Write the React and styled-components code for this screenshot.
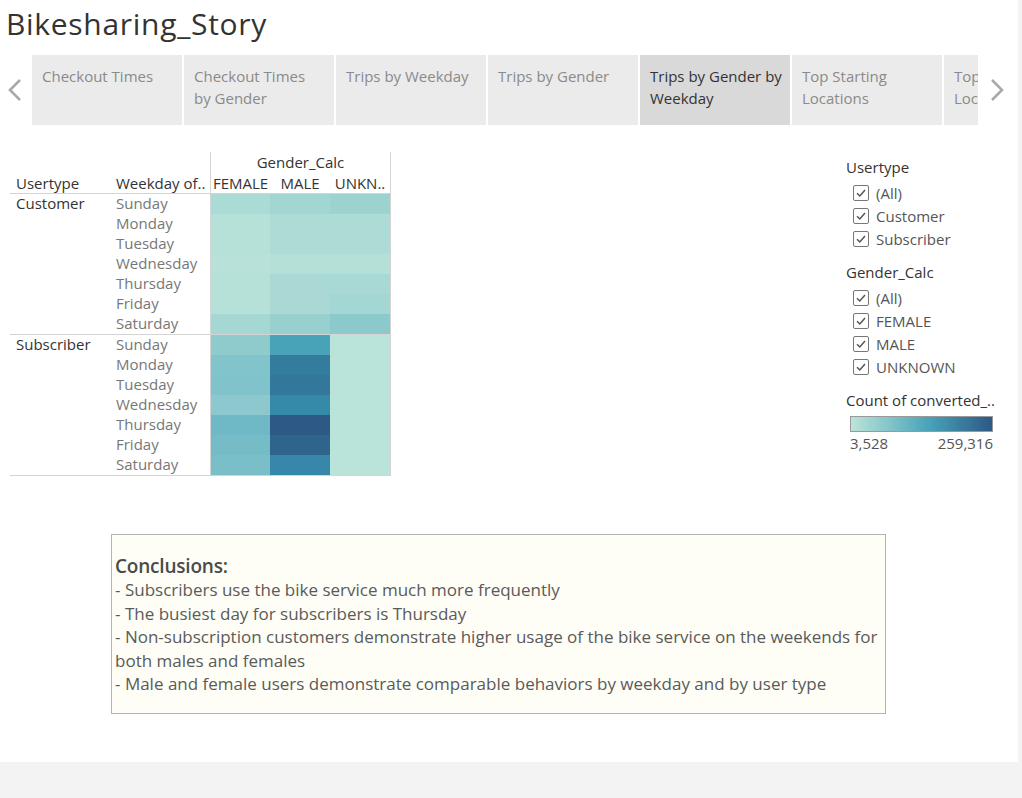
import React from 'react';
import styled, { createGlobalStyle } from 'styled-components';

const GlobalStyle = createGlobalStyle`
  html, body {
    margin: 0;
    padding: 0;
    background: #f3f3f3;
  }
  body {
    font-family: "Open Sans", "Noto Sans", sans-serif;
    color: #333;
  }
`;

const Page = styled.div`
  width: 1018px;
  height: 762px;
  background: #fff;
  overflow: hidden;
`;

const Title = styled.h1`
  margin: 0;
  padding: 6px 0 0 6px;
  height: 36px;
  font-size: 30px;
  line-height: 36px;
  font-weight: 400;
  letter-spacing: 0.7px;
  color: #333;
`;

const Nav = styled.div`
  display: flex;
  height: 70px;
  margin-top: 13px;
`;

const ArrowBox = styled.div`
  width: ${(p) => p.$w}px;
  display: flex;
  align-items: center;
  padding-left: ${(p) => p.$pad}px;
  box-sizing: border-box;
`;

const TabStrip = styled.div`
  width: 946px;
  display: flex;
  gap: 2px;
  overflow: hidden;
`;

const Tab = styled.div`
  flex: 0 0 150px;
  box-sizing: border-box;
  padding: 10px 0 0 10px;
  overflow: hidden;
  background: ${(p) => (p.$active ? '#d9d9d9' : '#ebebeb')};
  color: ${(p) => (p.$active ? '#333' : '#8a8a8a')};
  font-size: 15px;
  line-height: 22px;
`;

const TabLine = styled.div`
  white-space: nowrap;
`;

const Content = styled.div`
  display: flex;
  margin-top: 27px;
`;

const Table = styled.div`
  margin-left: 10px;
  width: 381px;
`;

const HeadRow = styled.div`
  display: flex;
`;

const LabelHead = styled.div`
  width: 200px;
  display: flex;
  align-items: flex-end;
`;

const HeadCell = styled.div`
  width: 100px;
  box-sizing: border-box;
  padding-left: 6px;
  height: 20px;
  line-height: 20px;
  font-size: 15px;
  color: #333;
  white-space: nowrap;
`;

const GenderHead = styled.div`
  width: 181px;
  box-sizing: border-box;
  border-left: 1px solid #d4d4d4;
  border-right: 1px solid #d4d4d4;
`;

const GenderTitle = styled.div`
  text-align: center;
  font-size: 15px;
  line-height: 21px;
  color: #333;
`;

const ColNames = styled.div`
  display: grid;
  grid-template-columns: 59px 60px 60px;
  height: 20px;
  line-height: 20px;
`;

const ColName = styled.div`
  text-align: center;
  font-size: 15px;
  color: #333;
  white-space: nowrap;
`;

const Group = styled.div`
  display: flex;
  border-top: 1px solid #d4d4d4;
  border-bottom: ${(p) => (p.$last ? '1px solid #d4d4d4' : 'none')};
`;

const UserCell = styled.div`
  width: 100px;
  box-sizing: border-box;
  padding-left: 6px;
  font-size: 15px;
  line-height: 19px;
  color: #333;
`;

const DayList = styled.div`
  width: 100px;
  box-sizing: border-box;
  padding-left: 6px;
`;

const Day = styled.div`
  height: 20px;
  line-height: 19px;
  font-size: 15px;
  color: #777;
`;

const Heat = styled.div`
  width: 181px;
  box-sizing: border-box;
  border-left: 1px solid #d4d4d4;
  border-right: 1px solid #d4d4d4;
  display: grid;
  grid-template-columns: 59px 60px 60px;
  grid-auto-rows: 20px;
`;

const HeatCell = styled.div`
  background: ${(p) => p.$c};
`;

const Legend = styled.div`
  margin-left: auto;
  width: 172px;
  padding-top: 5px;
`;

const LegendTitle = styled.div`
  font-size: 15px;
  line-height: 20px;
  color: #333;
  margin-bottom: ${(p) => p.$mb || 4}px;
  white-space: nowrap;
`;

const CheckList = styled.div`
  padding-left: 7px;
  margin-bottom: 12px;
`;

const CheckRow = styled.div`
  display: flex;
  align-items: center;
  height: 23px;
  gap: 7px;
  font-size: 15px;
  color: #555;
`;

const Box = styled.span`
  width: 16px;
  height: 16px;
  box-sizing: border-box;
  border: 1px solid #777;
  border-radius: 2px;
  display: flex;
  align-items: center;
  justify-content: center;
`;

const Ramp = styled.div`
  margin-left: 4px;
  width: 143px;
  height: 16px;
  box-sizing: border-box;
  border: 1px solid #999;
  background: linear-gradient(to right, #bce4d8, #49a3b9 55%, #2c5985);
`;

const RampLabels = styled.div`
  margin-left: 4px;
  width: 143px;
  display: flex;
  justify-content: space-between;
  font-size: 15px;
  line-height: 22px;
  color: #555;
`;

const NoteBox = styled.div`
  margin: 58px 0 0 111px;
  width: 775px;
  height: 180px;
  box-sizing: border-box;
  border: 1px solid #b4b4b4;
  background: #fefef6;
  padding: 19px 0 0 3px;
`;

const NoteTitle = styled.div`
  font-size: 19px;
  line-height: 24px;
  font-weight: 600;
  color: #4a4a4a;
  letter-spacing: -0.2px;
`;

const NoteLine = styled.div`
  font-size: 17px;
  line-height: 23.5px;
  color: #5a5a5a;
`;

const Chevron = ({ dir }) => (
  <svg width="16" height="24" viewBox="0 0 16 24">
    <path
      d={dir === 'left' ? 'M13 2 L3 12 L13 22' : 'M3 2 L13 12 L3 22'}
      fill="none"
      stroke="#a9a9a9"
      strokeWidth="2.6"
    />
  </svg>
);

const Tick = () => (
  <svg width="12" height="12" viewBox="0 0 12 12">
    <path d="M2 6.2 L4.8 9 L10 3" fill="none" stroke="#555" strokeWidth="1.5" />
  </svg>
);

const tabs = [
  ['Checkout Times'],
  ['Checkout Times', 'by Gender'],
  ['Trips by Weekday'],
  ['Trips by Gender'],
  ['Trips by Gender by', 'Weekday'],
  ['Top Starting', 'Locations'],
  ['Top Ending', 'Locations'],
];

const days = ['Sunday', 'Monday', 'Tuesday', 'Wednesday', 'Thursday', 'Friday', 'Saturday'];

const groups = [
  {
    name: 'Customer',
    cells: [
      ['#abdbd5', '#a2d6d2', '#9cd3d0'],
      ['#b5e1d8', '#addbd6', '#addbd6'],
      ['#b5e1d8', '#addbd6', '#addbd6'],
      ['#b8e2d9', '#b5e0d8', '#b5e0d8'],
      ['#b5e1d8', '#aad9d5', '#a8d9d5'],
      ['#b5e1d8', '#aad9d5', '#a3d7d3'],
      ['#a5d8d3', '#97d0ce', '#8bc9cb'],
    ],
  },
  {
    name: 'Subscriber',
    cells: [
      ['#8fcacd', '#48a3b9', '#bae3d9'],
      ['#82c4cb', '#347c9e', '#bae3d9'],
      ['#80c3ca', '#34779c', '#bae3d9'],
      ['#8cc8cd', '#358aa9', '#bae3d9'],
      ['#6fb9c6', '#2c5985', '#bae3d9'],
      ['#76bcc7', '#2f658c', '#bae3d9'],
      ['#7abfc8', '#3687aa', '#bae3d9'],
    ],
  },
];

const filters = [
  { title: 'Usertype', items: ['(All)', 'Customer', 'Subscriber'] },
  { title: 'Gender_Calc', items: ['(All)', 'FEMALE', 'MALE', 'UNKNOWN'] },
];

const notes = [
  '- Subscribers use the bike service much more frequently',
  '- The busiest day for subscribers is Thursday',
  '- Non-subscription customers demonstrate higher usage of the bike service on the weekends for both males and females',
  '- Male and female users demonstrate comparable behaviors by weekday and by user type',
];

const App = () => {
  return (
    <Page>
      <GlobalStyle />
      <Title>Bikesharing_Story</Title>

      <Nav>
        <ArrowBox $w={32} $pad={7}>
          <Chevron dir="left" />
        </ArrowBox>
        <TabStrip>
          {tabs.map((t, i) => (
            <Tab key={i} $active={i === 4}>
              {t.map((line) => (
                <TabLine key={line}>{line}</TabLine>
              ))}
            </Tab>
          ))}
        </TabStrip>
        <ArrowBox $w={40} $pad={11}>
          <Chevron dir="right" />
        </ArrowBox>
      </Nav>

      <Content>
        <Table>
          <HeadRow>
            <LabelHead>
              <HeadCell>Usertype</HeadCell>
              <HeadCell>Weekday of..</HeadCell>
            </LabelHead>
            <GenderHead>
              <GenderTitle>Gender_Calc</GenderTitle>
              <ColNames>
                <ColName>FEMALE</ColName>
                <ColName>MALE</ColName>
                <ColName>UNKN..</ColName>
              </ColNames>
            </GenderHead>
          </HeadRow>
          {groups.map((g, gi) => (
            <Group key={g.name} $last={gi === groups.length - 1}>
              <UserCell>{g.name}</UserCell>
              <DayList>
                {days.map((d) => (
                  <Day key={d}>{d}</Day>
                ))}
              </DayList>
              <Heat>
                {g.cells.flat().map((c, ci) => (
                  <HeatCell key={ci} $c={c} />
                ))}
              </Heat>
            </Group>
          ))}
        </Table>

        <Legend>
          {filters.map((f) => (
            <div key={f.title}>
              <LegendTitle>{f.title}</LegendTitle>
              <CheckList>
                {f.items.map((it) => (
                  <CheckRow key={it}>
                    <Box>
                      <Tick />
                    </Box>
                    {it}
                  </CheckRow>
                ))}
              </CheckList>
            </div>
          ))}
          <LegendTitle $mb={6}>Count of converted_..</LegendTitle>
          <Ramp />
          <RampLabels>
            <span>3,528</span>
            <span>259,316</span>
          </RampLabels>
        </Legend>
      </Content>

      <NoteBox>
        <NoteTitle>Conclusions:</NoteTitle>
        {notes.map((n) => (
          <NoteLine key={n}>{n}</NoteLine>
        ))}
      </NoteBox>
    </Page>
  );
};

export default App;
